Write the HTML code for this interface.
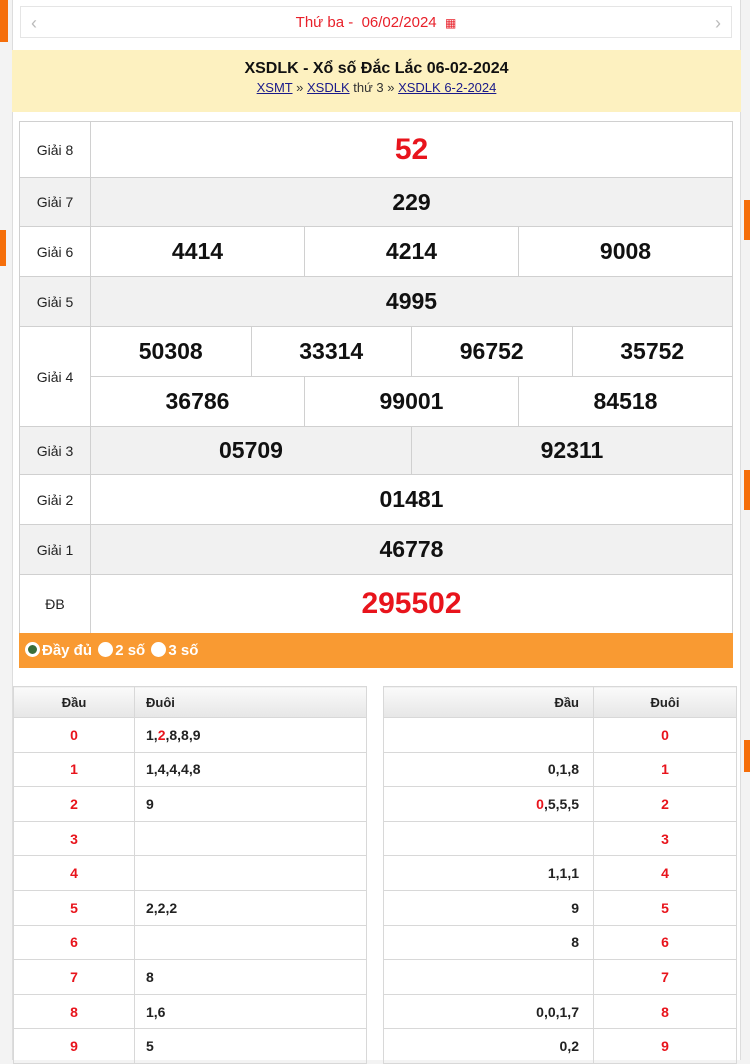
<!DOCTYPE html><html><head><meta charset="utf-8"><style>
*{margin:0;padding:0;box-sizing:border-box}
body{width:750px;height:1060px;background:#f3f3f3;font-family:"Liberation Sans",Arial,sans-serif;position:relative;overflow:hidden}
.wrap{position:absolute;left:12px;top:0;width:729px;height:1060px;background:#fff;border-left:1px solid #ddd;border-right:1px solid #ddd}
.nav{position:absolute;left:20px;top:6px;width:712px;height:32px;border:1px solid #e5e5e5;background:#fff;text-align:center;color:#e8202a;font-size:15px;line-height:32px}
.nav .l,.nav .r{position:absolute;top:0;color:#bbb;font-size:18px}
.hd{position:absolute;left:12px;top:50px;width:729px;height:62px;background:#fdf1c0;text-align:center}
.hd b{display:block;font-size:16px;margin-top:10px;color:#111}
.hd div{font-size:13px;color:#333;margin-top:2px}
.hd a{color:#1a1a8a;text-decoration:underline}
table{border-collapse:collapse;position:absolute}
.kq{left:19px;top:121px;width:714px;table-layout:fixed}
.kq td{border:1px solid #d0d0d0;text-align:center;font-weight:bold;font-size:23px;color:#111}
.kq td.lb{font-weight:normal;font-size:14px;color:#222}
.kq tr.g td{background:#f1f1f1}
.red{color:#e8141c!important}
.bar{position:absolute;left:19px;top:633px;width:714px;height:35px;background:#f99a32;color:#fff;font-weight:bold;font-size:15px;line-height:35px;padding-left:4px}
.bar i{display:inline-block;width:15px;height:15px;border-radius:50%;background:#fff;vertical-align:-2px;margin:0 2px 0 2px}
.bar i.on{background:#3a6e3a;border:3px solid #fff}
.lt td{border:1px solid #d8d8d8;height:34.6px;font-size:14px;font-weight:bold;color:#222}
.lt tr:first-child td{background:linear-gradient(#fafafa,#e6e6e6);height:31px;font-size:13px}
.lt .c{text-align:center}
.lt .n{color:#e8141c;text-align:center}
.lt .p{padding-left:11px}
.lt .rr{text-align:right;padding-right:14px}
.o{position:absolute;background:#f56e0a}
</style></head><body>
<div class="o" style="left:0;top:0;width:8px;height:42px"></div>
<div class="o" style="left:0;top:230px;width:6px;height:36px"></div>
<div class="o" style="left:744px;top:200px;width:6px;height:40px"></div>
<div class="o" style="left:744px;top:470px;width:6px;height:40px"></div>
<div class="o" style="left:744px;top:740px;width:6px;height:32px"></div>
<div class="wrap"></div>
<div class="nav"><span class="l" style="left:10px">‹</span>Thứ ba - &nbsp;06/02/2024 &nbsp;<span style="font-size:12px">▦</span><span class="r" style="right:10px">›</span></div>
<div class="hd"><b>XSDLK - Xổ số Đắc Lắc 06-02-2024</b><div><a>XSMT</a> » <a>XSDLK</a> thứ 3 » <a>XSDLK 6-2-2024</a></div></div>
<table class="kq">
<colgroup><col style="width:71px"><col><col><col><col><col><col><col><col><col><col><col><col></colgroup>
<tr style="height:56px"><td class="lb">Giải 8</td><td colspan="12" class="red" style="font-size:30px">52</td></tr>
<tr class="g" style="height:49px"><td class="lb">Giải 7</td><td colspan="12">229</td></tr>
<tr style="height:50px"><td class="lb">Giải 6</td><td colspan="4">4414</td><td colspan="4">4214</td><td colspan="4">9008</td></tr>
<tr class="g" style="height:50px"><td class="lb">Giải 5</td><td colspan="12">4995</td></tr>
<tr style="height:50px"><td class="lb" rowspan="2">Giải 4</td><td colspan="3">50308</td><td colspan="3">33314</td><td colspan="3">96752</td><td colspan="3">35752</td></tr>
<tr style="height:50px"><td colspan="4">36786</td><td colspan="4">99001</td><td colspan="4">84518</td></tr>
<tr class="g" style="height:48px"><td class="lb">Giải 3</td><td colspan="6">05709</td><td colspan="6">92311</td></tr>
<tr style="height:50px"><td class="lb">Giải 2</td><td colspan="12">01481</td></tr>
<tr class="g" style="height:50px"><td class="lb">Giải 1</td><td colspan="12">46778</td></tr>
<tr style="height:59px"><td class="lb">ĐB</td><td colspan="12" class="red" style="font-size:30px">295502</td></tr>
</table>
<div class="bar"><i class="on"></i>Đầy đủ <i></i>2 số <i></i>3 số</div>
<table class="lt" style="left:13px;top:686px;width:354px">
<tr><td class="c" style="width:121px">Đầu</td><td class="p">Đuôi</td></tr>
<tr><td class="n">0</td><td class="p">1,<span style="color:#e8141c">2</span>,8,8,9</td></tr>
<tr><td class="n">1</td><td class="p">1,4,4,4,8</td></tr>
<tr><td class="n">2</td><td class="p">9</td></tr>
<tr><td class="n">3</td><td class="p"></td></tr>
<tr><td class="n">4</td><td class="p"></td></tr>
<tr><td class="n">5</td><td class="p">2,2,2</td></tr>
<tr><td class="n">6</td><td class="p"></td></tr>
<tr><td class="n">7</td><td class="p">8</td></tr>
<tr><td class="n">8</td><td class="p">1,6</td></tr>
<tr><td class="n">9</td><td class="p">5</td></tr>
</table>
<table class="lt" style="left:383px;top:686px;width:354px">
<tr><td class="rr">Đầu</td><td class="c" style="width:143px">Đuôi</td></tr>
<tr><td class="rr"></td><td class="n">0</td></tr>
<tr><td class="rr">0,1,8</td><td class="n">1</td></tr>
<tr><td class="rr"><span style="color:#e8141c">0</span>,5,5,5</td><td class="n">2</td></tr>
<tr><td class="rr"></td><td class="n">3</td></tr>
<tr><td class="rr">1,1,1</td><td class="n">4</td></tr>
<tr><td class="rr">9</td><td class="n">5</td></tr>
<tr><td class="rr">8</td><td class="n">6</td></tr>
<tr><td class="rr"></td><td class="n">7</td></tr>
<tr><td class="rr">0,0,1,7</td><td class="n">8</td></tr>
<tr><td class="rr">0,2</td><td class="n">9</td></tr>
</table>
</body></html>
